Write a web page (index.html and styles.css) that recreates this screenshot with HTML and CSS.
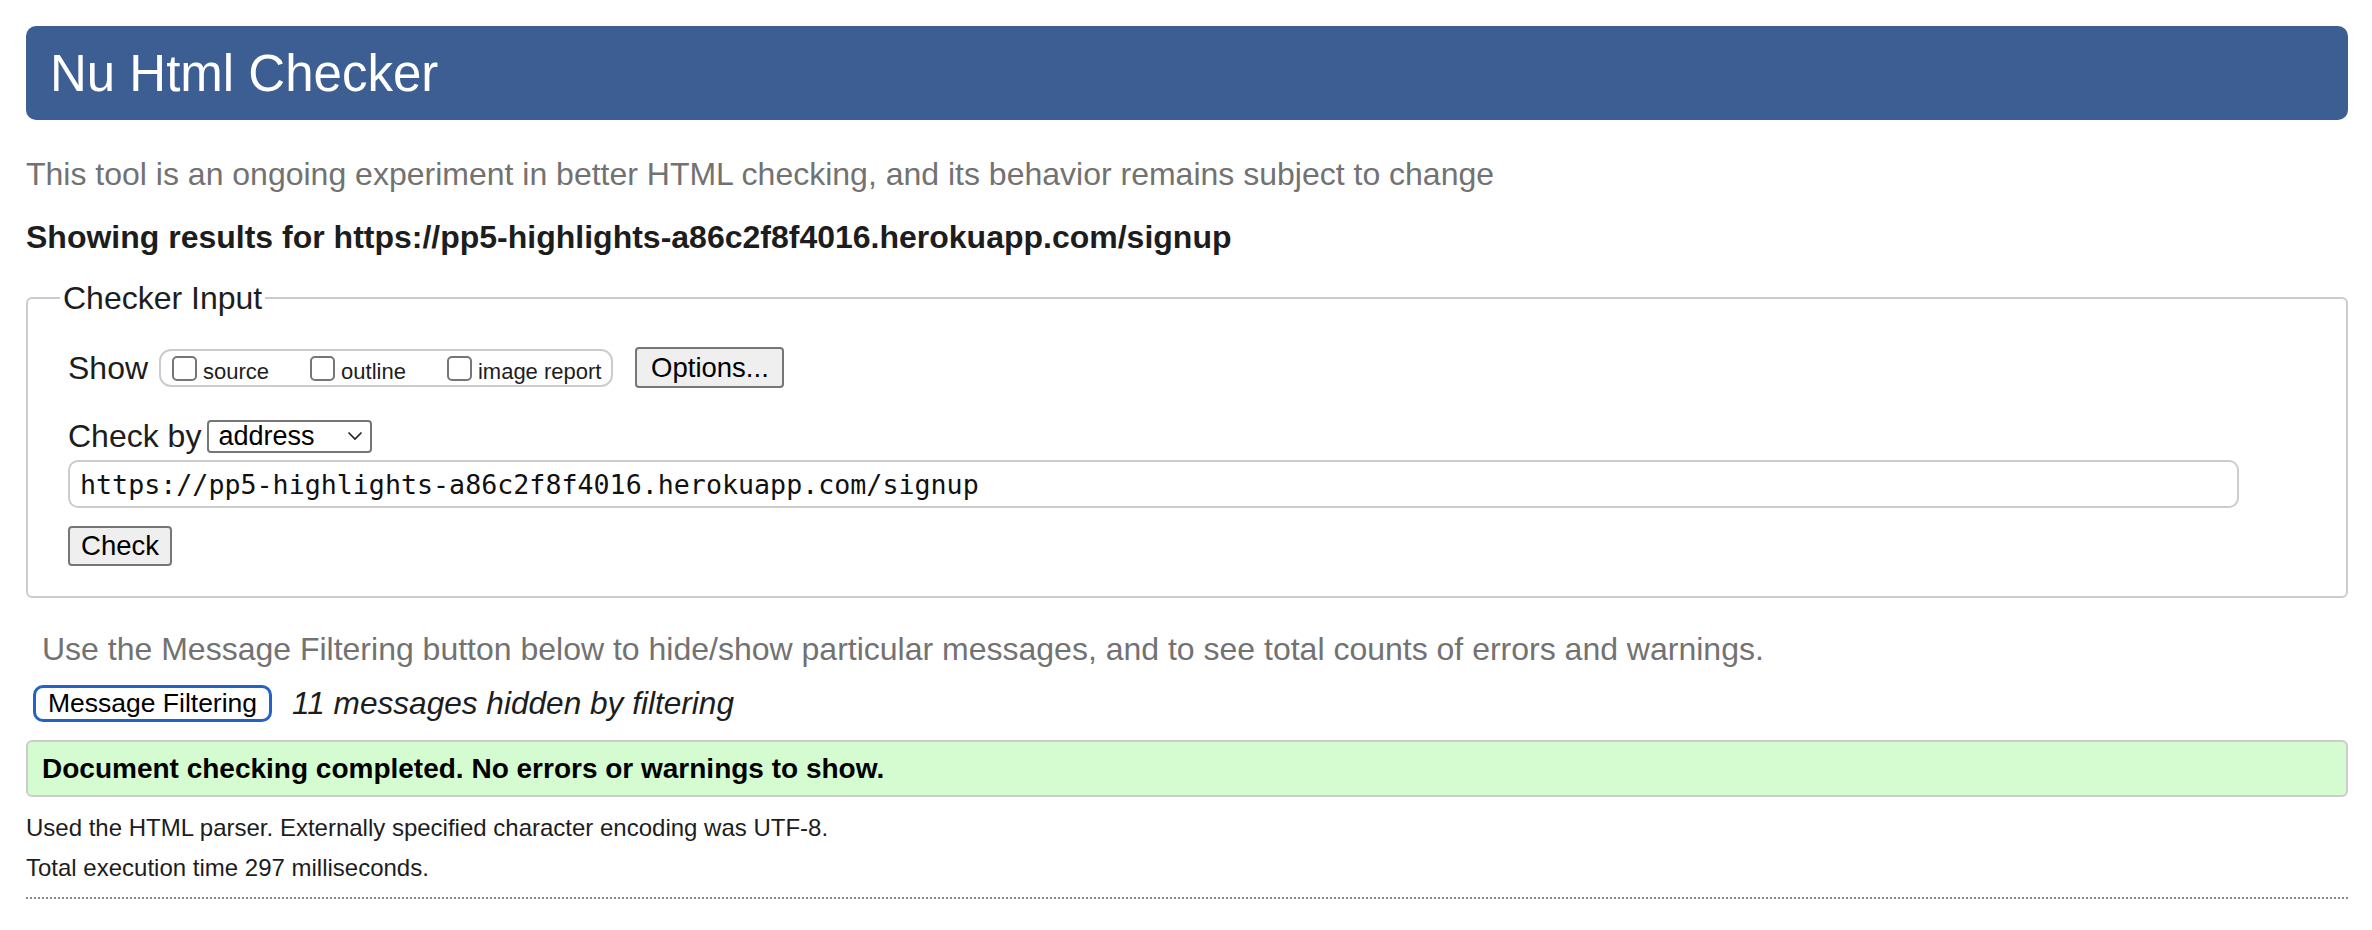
FILE: index.html
```html
<!DOCTYPE html>
<html lang="en">
<head>
<meta charset="utf-8">
<title>Nu Html Checker</title>
<link rel="stylesheet" href="styles.css">
</head>
<body>
<header class="masthead"><h1 class="title">Nu Html Checker</h1></header>
<p class="intro">This tool is an ongoing experiment in better HTML checking, and its behavior remains subject to change</p>
<p class="showing">Showing results for https://pp5-highlights-a86c2f8f4016.herokuapp.com/signup</p>
<form class="form">
<fieldset class="checker">
<legend class="legend">Checker Input</legend>
<div class="row row-show">
<span class="label">Show</span>
<span class="group">
<label class="opt"><input class="box" type="checkbox"><span>source</span></label>
<label class="opt"><input class="box" type="checkbox"><span>outline</span></label>
<label class="opt"><input class="box" type="checkbox"><span>image report</span></label>
</span>
<button class="btn btn-options" type="button">Options...</button>
</div>
<div class="row row-by">
<span class="label">Check by</span>
<span class="select"><span>address</span><svg class="chev" width="16" height="10" viewBox="0 0 16 10"><path d="M1.5 1.5 L8 8 L14.5 1.5" fill="none" stroke="#222" stroke-width="1.6"/></svg></span>
</div>
<input class="url" type="text" value="https://pp5-highlights-a86c2f8f4016.herokuapp.com/signup">
<div class="row-submit"><button class="btn btn-check" type="button">Check</button></div>
</fieldset>
</form>
<p class="hint">Use the Message Filtering button below to hide/show particular messages, and to see total counts of errors and warnings.</p>
<div class="filters">
<button class="btn-filter" type="button">Message Filtering</button>
<em class="hidden">11 messages hidden by filtering</em>
</div>
<div class="success">Document checking completed. No errors or warnings to show.</div>
<p class="meta meta-first">Used the HTML parser. Externally specified character encoding was UTF-8.</p>
<p class="meta meta-second">Total execution time 297 milliseconds.</p>
<hr class="rule">
</body>
</html>
```
FILE: styles.css
```css
html, body {
  background: #ffffff;
}
body {
  margin: 0;
  padding: 26px 24px 0 26px;
  font-family: "Liberation Sans", Arial, sans-serif;
  color: #222222;
}
.masthead {
  height: 94px;
  background: #3d5e92;
  border-radius: 10px;
  display: flex;
  align-items: center;
  padding-left: 24px;
}
.title {
  margin: 0;
  font-size: 51px;
  font-weight: normal;
  color: #ffffff;
  line-height: 1;
}
.intro {
  margin: 35px 0 0 0;
  font-size: 32px;
  line-height: 38px;
  color: #727272;
}
.showing {
  margin: 25px 0 0 0;
  font-size: 32px;
  line-height: 38px;
  font-weight: bold;
  color: #1d1d1d;
}
.form {
  margin: 23px 0 0 0;
}
.checker {
  margin: 0;
  border: 2px solid #cccccc;
  border-radius: 6px;
  padding: 30px 40px 30px 40px;
}
.legend {
  font-size: 32px;
  line-height: 38px;
  padding: 0 3px;
  margin-left: -8px;
  color: #1d1d1d;
}
.row {
  display: flex;
  align-items: center;
}
.row-show {
  height: 41px;
}
.label {
  font-size: 32px;
  line-height: 38px;
  color: #1d1d1d;
}
.group {
  display: flex;
  align-items: flex-end;
  margin-left: 11px;
  height: 34px;
  border: 2px solid #cccccc;
  border-radius: 12px;
  padding: 0 10px 0 11px;
  box-sizing: content-box;
}
.opt {
  display: flex;
  align-items: flex-end;
  font-size: 22px;
  line-height: 26px;
  color: #1d1d1d;
  margin-right: 41px;
  padding-bottom: 3px;
}
.opt:last-child {
  margin-right: 0;
}
.opt span {
  position: relative;
  top: 3px;
}
.box {
  appearance: none;
  -webkit-appearance: none;
  width: 25px;
  height: 25px;
  margin: 0 6px 0 0;
  border: 2px solid #767676;
  border-radius: 5px;
  background: #ffffff;
  box-sizing: border-box;
  position: relative;
  top: -1px;
}
.btn {
  font-family: "Liberation Sans", Arial, sans-serif;
  font-size: 27.5px;
  color: #000000;
  background: #efefef;
  border: 2px solid #767676;
  border-radius: 4px;
  box-sizing: border-box;
  line-height: 30px;
}
.btn-options {
  margin-left: 22px;
  height: 41px;
  width: 149px;
  padding: 0;
}
.row-by {
  height: 38px;
  margin-top: 29px;
}
.select {
  display: flex;
  align-items: center;
  justify-content: space-between;
  box-sizing: border-box;
  width: 165px;
  height: 33px;
  margin-left: 6px;
  border: 2px solid #767676;
  border-radius: 4px;
  padding: 0 7px 0 9px;
  font-size: 27px;
  color: #000000;
}
.chev {
  display: block;
}
.url {
  display: block;
  margin: 5px 0 0 0;
  width: 97%;
  height: 48px;
  box-sizing: border-box;
  border: 2px solid #cccccc;
  border-radius: 10px;
  padding: 0 10px;
  font-family: "DejaVu Sans Mono", "Liberation Mono", monospace;
  font-size: 26.67px;
  color: #111111;
  background: #ffffff;
}
.row-submit {
  margin-top: 18px;
}
.btn-check {
  display: block;
  width: 104px;
  height: 40px;
  padding: 0;
}
.hint {
  margin: 32px 0 0 16px;
  font-size: 32px;
  line-height: 38px;
  color: #727272;
}
.filters {
  display: flex;
  align-items: center;
  height: 38px;
  margin: 16px 0 0 7px;
}
.btn-filter {
  font-family: "Liberation Sans", Arial, sans-serif;
  font-size: 26.5px;
  color: #000000;
  background: #ffffff;
  border: 3px solid #2462c7;
  border-radius: 10px;
  height: 37px;
  width: 239px;
  padding: 0;
  box-sizing: border-box;
  line-height: 29px;
}
.hidden {
  margin-left: 20px;
  font-size: 31.6px;
  line-height: 38px;
  color: #1d1d1d;
}
.success {
  margin-top: 18px;
  border: 2px solid #cccccc;
  border-radius: 6px;
  background: #d5fcd1;
  padding: 10px 14px;
  font-size: 28px;
  line-height: 33px;
  font-weight: bold;
  color: #000000;
}
.meta {
  margin: 0;
  font-size: 24px;
  line-height: 28px;
  color: #1d1d1d;
}
.meta-first {
  margin-top: 17px;
}
.meta-second {
  margin-top: 12px;
}
.rule {
  margin: 15px 0 0 0;
  border: 0;
  border-top: 2px dotted #8a8a8a;
  height: 0;
}
```
